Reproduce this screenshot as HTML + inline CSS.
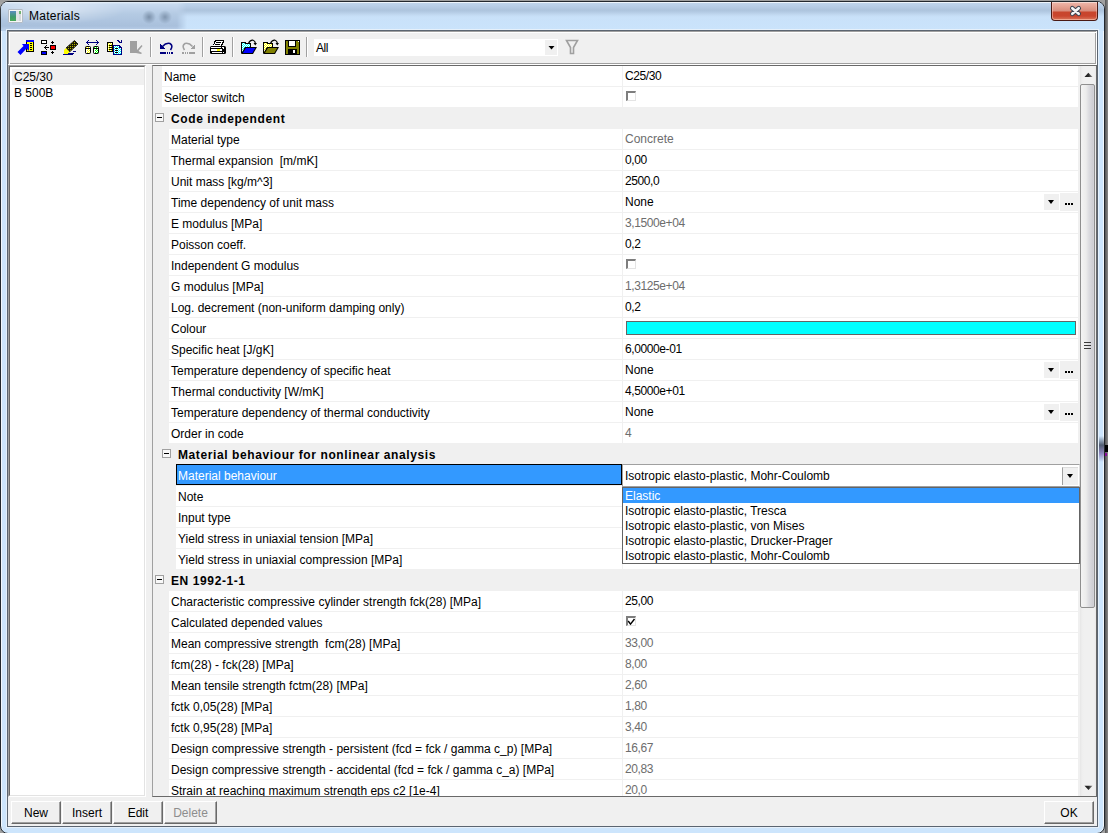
<!DOCTYPE html>
<html><head><meta charset="utf-8">
<style>
*{margin:0;padding:0;box-sizing:border-box}
html,body{width:1108px;height:833px;overflow:hidden;background:#a0a0a0;font-family:"Liberation Sans",sans-serif;font-size:12px;color:#000}
.a{position:absolute}
#bgr{left:1105px;top:0;width:3px;height:833px;background:linear-gradient(90deg,#555,#8a8a8a)}
#win{box-shadow:inset 1px 1px 0 #f2f7fc,inset -1px 0 0 #f2f7fc;left:0;top:1px;width:1105px;height:833px;border:1px solid #23282e;border-radius:8px;background:#cde5fc;overflow:hidden}
#title{left:0;top:0;width:1103px;height:29px;background:linear-gradient(180deg,#eef5fc 0px,#eef5fc 1px,#bfd4eb 1px,#b8cee7 4px,#adc4dd 8px,#b4cbe4 10px,#c3daf2 13px,#c9e1f9 15px,#cae3fb 27px)}
#titleL{-webkit-mask-image:linear-gradient(90deg,#000 176px,transparent 186px);left:0;top:0;width:190px;height:29px;background:linear-gradient(180deg,#e9f1f9 0px,#c8daef 2px,#b4cae3 12px,#a9c0dc 24px,#b8cee8 28px)}
#client{left:7px;top:30px;width:1091px;height:797px;border:1px solid #5b6571;background:#f0f0f0}
.t{position:absolute;white-space:nowrap;line-height:14px}
.row{position:absolute;background:#fff;height:20px}
.sep{position:absolute;height:1px;background:#f0f0f0}
.lab{position:absolute;white-space:nowrap;line-height:20px;height:20px}
.val{position:absolute;left:625px;white-space:nowrap;line-height:20px;height:20px}
.g{color:#6d6d6d}
.hdr{font-weight:bold;letter-spacing:0.6px}
.box{position:absolute;width:9px;height:9px;border:1px solid #a0a0a0;background:#f8f8f8}
.box:after{content:"";position:absolute;left:1px;top:3px;width:5px;height:1px;background:#000}
.cb{position:absolute;width:10px;height:10px;border-style:solid;border-width:2px 1px 1px 2px;border-color:#7e7e7e #e4e4e4 #e4e4e4 #7e7e7e;background:#fff}
.btn{position:absolute;height:23px;border:1px solid;border-color:#fff #696969 #696969 #fff;box-shadow:inset -1px -1px 0 #a0a0a0;background:#f0f0f0;text-align:center;line-height:21px;padding-top:1px;font-size:12px}
.ddb{position:absolute;width:15px;height:16px;background:#f0f0f0}
.ddb:after{content:"";position:absolute;left:4px;top:6px;border-left:3.5px solid transparent;border-right:3.5px solid transparent;border-top:4px solid #000}
.ell{position:absolute;width:19px;height:18px;background:#f0f0f0}
.ell:after{content:"";position:absolute;left:5px;top:10px;width:2px;height:2px;background:#000;box-shadow:3px 0 0 #000,6px 0 0 #000}

</style></head><body>
<div id="bgr" class="a"></div>
<div id="win" class="a">
  <div id="title" class="a"></div>
  <div id="titleL" class="a"></div>
</div>
<div class="a" style="left:138px;top:9px;width:36px;height:16px;background:radial-gradient(circle 7px at 11px 8px,rgba(70,90,115,0.5),rgba(70,90,115,0) 100%),radial-gradient(circle 7px at 27px 8px,rgba(70,90,115,0.45),rgba(70,90,115,0) 100%)"></div>
<div class="a" style="left:1098px;top:436px;width:6px;height:26px;background:linear-gradient(180deg,rgba(60,70,90,0) 0%,rgba(60,70,90,0.85) 35%,rgba(110,90,160,0.7) 65%,rgba(150,130,200,0) 100%)"></div>
<div class="a" style="left:1105px;top:445px;width:3px;height:7px;background:#000"></div>
<div class="a" style="left:1105px;top:453px;width:2px;height:3px;background:#8a0a9a"></div>
<!-- close button -->
<div class="a" style="left:1051px;top:2px;width:47px;height:19px;border:1px solid #4a1a14;border-top:none;border-radius:0 0 4px 4px;box-shadow:inset 0 1px 0 #f6d8d0,inset 1px 0 0 rgba(255,210,200,0.5),inset -1px 0 0 rgba(255,210,200,0.4),inset 0 -1px 0 rgba(255,200,180,0.6);background:linear-gradient(180deg,#f0b8ac 0px,#e4a090 5px,#d88c7c 9px,#c8452c 10px,#c9452e 14px,#d66a50 17px,#e0907a 19px)"></div>
<svg class="a" style="left:1060px;top:0" width="30" height="22"><path d="M12.3 8.2 L18.7 13.8 M18.7 8.2 L12.3 13.8" stroke="#3a4350" stroke-width="4.6" stroke-linecap="round" fill="none"/><path d="M12.3 8.2 L18.7 13.8 M18.7 8.2 L12.3 13.8" stroke="#f6f6f6" stroke-width="2.6" stroke-linecap="round" fill="none"/></svg>
<!-- title icon & text -->
<div class="a" style="left:0;top:2px;width:200px;height:27px;background:radial-gradient(ellipse 70px 14px at 55px 8px,rgba(255,255,255,0.45),rgba(255,255,255,0))"></div>
<div class="a" style="left:8px;top:9px;width:15px;height:14px;border:1px solid #b4bcc6;border-radius:1px;background:#f6f6f6"></div>
<div class="a" style="left:10px;top:11px;width:6px;height:10px;background:linear-gradient(180deg,#5b8cc0,#3f9a68 60%,#4aa85a)"></div>
<div class="a" style="left:16px;top:11px;width:3px;height:10px;background:#e2e4e6"></div>
<div class="a" style="left:19px;top:11px;width:2px;height:10px;background:#d4d8dc"></div>
<div class="a" style="left:19px;top:11px;width:2px;height:3px;background:#6fb36f"></div>
<div class="t" style="left:29px;top:8px;font-size:12px;line-height:16px;letter-spacing:0.25px">Materials</div>

<div class="a" style="left:6px;top:29px;width:1093px;height:799px;border:1px solid #e6f0fa"></div>
<div id="client" class="a"></div>
<!-- toolbar etched frame -->
<div class="a" style="left:8px;top:31px;width:1088px;height:33px;border:1px solid #a0a0a0"></div>
<div class="a" style="left:9px;top:32px;width:1088px;height:33px;border:1px solid #fff;border-top-color:#fff"></div>
<div class="a" style="left:10px;top:33px;width:1085px;height:30px;background:#f0f0f0"></div>
<!-- TOOLBAR -->
<svg class="a" style="left:0;top:0" width="600" height="64" shape-rendering="crispEdges">
<defs>
<pattern id="pk" width="2" height="2" patternUnits="userSpaceOnUse"><rect width="2" height="2" fill="#1a1a00"/><rect width="1" height="1" fill="#b8b800"/></pattern>
<pattern id="pc" width="2" height="2" patternUnits="userSpaceOnUse"><rect width="2" height="2" fill="#00ffff"/><rect width="1" height="1" fill="#fff"/><rect x="1" y="1" width="1" height="1" fill="#fff"/></pattern>
<pattern id="py" width="2" height="2" patternUnits="userSpaceOnUse"><rect width="2" height="2" fill="#ffff00"/><rect width="1" height="1" fill="#fff"/><rect x="1" y="1" width="1" height="1" fill="#fff"/></pattern>
</defs>
<!-- icon1: arrow + doc -->
<rect x="26" y="40" width="8" height="12" fill="#000"/>
<rect x="26" y="40" width="8" height="2" fill="#0000ff"/>
<rect x="27" y="42" width="6" height="9" fill="#ffff00"/>
<rect x="30" y="43" width="2" height="1" fill="#000"/><rect x="30" y="45" width="2" height="1" fill="#000"/><rect x="30" y="47" width="2" height="1" fill="#000"/><rect x="30" y="49" width="2" height="1" fill="#000"/>
<polygon points="22,44 29,44 29,51 26.5,48.5 20.5,55 17.5,52 23.5,46" fill="#0000ff" shape-rendering="auto"/>
<!-- icon2: move -->
<rect x="41" y="40" width="6" height="4" fill="#000"/><rect x="42" y="41" width="4" height="2" fill="#fff"/>
<rect x="41" y="51" width="6" height="4" fill="#000"/><rect x="42" y="52" width="4" height="2" fill="#0000ff"/>
<rect x="50" y="45" width="6" height="5" fill="#000"/><rect x="51" y="46" width="4" height="3" fill="#ff0000"/>
<rect x="44" y="47" width="5" height="1" fill="#000"/><rect x="45" y="46" width="1" height="3" fill="#000"/><rect x="46" y="45" width="1" height="1" fill="#000"/><rect x="46" y="49" width="1" height="1" fill="#000"/>
<rect x="52" y="41" width="1" height="3" fill="#000"/><rect x="51" y="42" width="3" height="1" fill="#000"/>
<rect x="52" y="51" width="1" height="3" fill="#000"/><rect x="51" y="52" width="3" height="1" fill="#000"/>
<!-- icon3: pencil -->
<polygon points="66,48 74.5,40.5 78,44 69.5,52" fill="url(#pk)" shape-rendering="auto"/>
<path d="M66 48 L74.5 40.5 L78 44 L69.5 52 Z" stroke="#000" stroke-width="0.8" fill="none" shape-rendering="auto"/>
<polygon points="64,50 66,48 69.5,52 68,54 64,54" fill="#ffff00" shape-rendering="auto"/>
<rect x="63" y="54" width="10" height="1" fill="#000080"/><rect x="68" y="53" width="6" height="1" fill="#000080"/><rect x="73" y="51" width="3" height="1" fill="#000080"/>
<!-- icon4: cylinders -->
<rect x="86" y="42" width="13" height="1" fill="#000080"/>
<rect x="87" y="41" width="1" height="3" fill="#000080"/><rect x="88" y="40" width="1" height="1" fill="#000080"/><rect x="88" y="44" width="1" height="1" fill="#000080"/>
<rect x="97" y="41" width="1" height="3" fill="#000080"/><rect x="96" y="40" width="1" height="1" fill="#000080"/><rect x="96" y="44" width="1" height="1" fill="#000080"/>
<rect x="85" y="46" width="6" height="8" rx="2" fill="#000" shape-rendering="auto"/><rect x="86" y="47" width="4" height="1" fill="url(#py)"/><rect x="86" y="49" width="4" height="4" fill="url(#py)"/><rect x="86" y="49" width="1" height="4" fill="#fff"/>
<pattern id="pg" width="2" height="2" patternUnits="userSpaceOnUse"><rect width="2" height="2" fill="#00ff00"/><rect width="1" height="1" fill="#fff"/><rect x="1" y="1" width="1" height="1" fill="#fff"/></pattern>
<rect x="93" y="46" width="6" height="8" rx="2" fill="#000" shape-rendering="auto"/><rect x="94" y="47" width="4" height="1" fill="url(#pg)"/><rect x="94" y="49" width="4" height="4" fill="url(#pg)"/><rect x="94" y="49" width="1" height="4" fill="#fff"/>
<!-- icon5: copy docs -->
<rect x="107" y="42" width="6" height="10" fill="#000"/><rect x="108" y="43" width="4" height="8" fill="url(#py)"/>
<rect x="109" y="45" width="3" height="1" fill="#000"/><rect x="109" y="47" width="3" height="1" fill="#000"/><rect x="109" y="49" width="3" height="1" fill="#000"/>
<polygon points="113,45 119,45 122,48 122,55 113,55" fill="#000080"/>
<rect x="114" y="46" width="7" height="8" fill="url(#pc)"/><polygon points="119,45 122,48 119,48" fill="#000080"/>
<rect x="115" y="48" width="3" height="1" fill="#000"/><rect x="115" y="50" width="3" height="1" fill="#000"/><rect x="115" y="52" width="3" height="1" fill="#000"/>
<rect x="117" y="40" width="2" height="1" fill="#000080"/><rect x="118" y="41" width="2" height="1" fill="#000080"/><rect x="119" y="42" width="3" height="1" fill="#000080"/><rect x="121" y="40" width="1" height="3" fill="#000080"/>
<!-- icon6: gray -->
<rect x="130" y="41" width="7" height="12" fill="#a0a0a0"/>
<polygon points="137,50 141.5,45 142.5,46 138.5,51 142,53 141,54 136,53" fill="#a0a0a0" shape-rendering="auto"/>
<!-- separators -->
<rect x="150" y="37" width="1" height="20" fill="#a0a0a0"/><rect x="151" y="37" width="1" height="20" fill="#fff"/>
<rect x="202" y="37" width="1" height="20" fill="#a0a0a0"/><rect x="203" y="37" width="1" height="20" fill="#fff"/>
<rect x="232" y="37" width="1" height="20" fill="#a0a0a0"/><rect x="233" y="37" width="1" height="20" fill="#fff"/>
<rect x="306" y="37" width="1" height="20" fill="#a0a0a0"/><rect x="307" y="37" width="1" height="20" fill="#fff"/>
<!-- undo -->
<polygon points="160,44 160,49 165,49" fill="#000080"/>
<path d="M162.5 46.5 Q166 42.5 170 43.5 Q173.5 45.5 170.5 50" stroke="#000080" stroke-width="1.6" fill="none" shape-rendering="auto"/>
<rect x="160" y="52" width="6" height="2" fill="#000080"/><rect x="167" y="52" width="1" height="2" fill="#000080"/><rect x="169" y="52" width="1" height="2" fill="#000080"/><rect x="171" y="52" width="2" height="2" fill="#000080"/>
<!-- redo -->
<polygon points="195,44 195,49 190,49" fill="#a0a0a0"/>
<path d="M192.5 46.5 Q189 42.5 185 43.5 Q181.5 45.5 184.5 50" stroke="#a0a0a0" stroke-width="1.6" fill="none" shape-rendering="auto"/>
<rect x="189" y="52" width="6" height="2" fill="#a0a0a0"/><rect x="187" y="52" width="1" height="2" fill="#a0a0a0"/><rect x="185" y="52" width="1" height="2" fill="#a0a0a0"/><rect x="182" y="52" width="2" height="2" fill="#a0a0a0"/>
<!-- printer -->
<polygon points="215,40 224,40 224,42 222,46 213,46" fill="#000"/>
<polygon points="216,41 223,41 221,45.5 213.5,45.5" fill="#fff"/>
<rect x="216" y="42" width="5" height="1" fill="#000"/><rect x="215" y="44" width="5" height="1" fill="#000"/>
<rect x="210" y="46" width="16" height="8" rx="1.5" fill="#000" shape-rendering="auto"/>
<rect x="211" y="47" width="10" height="1" fill="#fff"/><rect x="211" y="49" width="11" height="2" fill="#fff"/><rect x="217" y="49" width="3" height="2" fill="#ffff00"/>
<rect x="212" y="52" width="10" height="1" fill="#fff"/>
<rect x="222" y="47" width="2" height="1" fill="#fff"/><rect x="223" y="48" width="1" height="1" fill="#fff"/><rect x="223" y="52" width="1" height="1" fill="#fff"/>
<!-- open1 -->
<polygon points="241,42 245,42 246,43 251,43 251,48 245,48 242,53 241,53" fill="#000"/>
<rect x="242" y="43" width="3" height="1" fill="url(#pc)"/><rect x="242" y="44" width="8" height="4" fill="url(#pc)"/><rect x="242" y="48" width="2" height="4" fill="url(#pc)"/>
<polygon points="245,47 257,47 253,54 241,54" fill="#000" shape-rendering="auto"/>
<polygon points="246,48 255.2,48 252.4,53 242.8,53" fill="#0000ff" shape-rendering="auto"/>
<path d="M248.5 43.5 Q250 39.8 253 40.2 Q255 40.8 255.3 43" stroke="#000" stroke-width="1.2" fill="none" shape-rendering="auto"/>
<polygon points="253.5,43 257,43 255.3,45.5" fill="#000" shape-rendering="auto"/>
<!-- open2 -->
<polygon points="263,42 267,42 268,43 273,43 273,48 267,48 264,53 263,53" fill="#000"/>
<rect x="264" y="43" width="3" height="1" fill="url(#py)"/><rect x="264" y="44" width="8" height="4" fill="url(#py)"/><rect x="264" y="48" width="2" height="4" fill="url(#py)"/>
<polygon points="267,47 279,47 275,54 263,54" fill="#000" shape-rendering="auto"/>
<polygon points="268,48 277.2,48 274.4,53 264.8,53" fill="#808000" shape-rendering="auto"/>
<path d="M270.5 43.5 Q272 39.8 275 40.2 Q277 40.8 277.3 43" stroke="#000" stroke-width="1.2" fill="none" shape-rendering="auto"/>
<polygon points="275.5,43 279,43 277.3,45.5" fill="#000" shape-rendering="auto"/>
<!-- save -->
<rect x="285" y="40" width="15" height="15" fill="#000"/>
<rect x="286" y="41" width="13" height="13" fill="#808000"/>
<rect x="288" y="41" width="8" height="6" fill="#000"/><rect x="289" y="41" width="6" height="5" fill="#fff"/>
<rect x="288" y="49" width="9" height="5" fill="#000"/><rect x="293" y="50" width="2" height="3" fill="#fff"/>
<rect x="298" y="41" width="1" height="1" fill="#fff"/>
<!-- combo -->
<rect x="314" y="39" width="244" height="17" fill="#fff"/>
<rect x="545" y="40" width="12" height="15" fill="#f0f0f0"/>
<polygon points="548.5,46 554.5,46 551.5,49.5" fill="#000" shape-rendering="auto"/>
<!-- filter -->
<path d="M566.5 40.5 H577.5 L573.5 47.5 V53.5 H570.5 V47.5 Z" stroke="#a0a0a0" stroke-width="1.6" fill="none" shape-rendering="auto"/>
</svg>

<div class="t" style="left:316px;top:41px;font-size:12px;line-height:14px;letter-spacing:-0.5px">All</div>

<!-- left list -->
<div class="a" style="left:8px;top:65px;width:138px;height:732px;border:1px solid;border-color:#a0a0a0 #fff #fff #a0a0a0"></div>
<div class="a" style="left:9px;top:66px;width:136px;height:730px;border:1px solid;border-color:#696969 #e3e3e3 #e3e3e3 #696969;background:#fff"></div>
<div class="a" style="left:12px;top:69px;width:132px;height:16px;background:#f0f0f0"></div>
<div class="t" style="left:14px;top:70px">C25/30</div>
<div class="t" style="left:14px;top:86px">B 500B</div>

<!-- grid -->
<div class="a" style="left:152px;top:65px;width:945px;height:732px;border:1px solid #696969;border-left-color:#a0a0a0;background:#f0f0f0"></div>
<div class="a" style="left:0;top:0;width:1108px;height:796px;overflow:hidden">
<div class="row" style="left:162px;top:66px;width:460px"></div>
<div class="row" style="left:623px;top:66px;width:455px"></div>
<div class="sep" style="left:162px;top:86px;width:916px"></div>
<div class="lab" style="left:164px;top:67px">Name</div>
<div class="val" style="top:66px;letter-spacing:-0.4px;">C25/30</div>
<div class="row" style="left:162px;top:87px;width:460px"></div>
<div class="row" style="left:623px;top:87px;width:455px"></div>
<div class="sep" style="left:162px;top:107px;width:916px"></div>
<div class="lab" style="left:164px;top:88px">Selector switch</div>
<div class="cb" style="left:626px;top:91px"></div>
<div class="box" style="left:155px;top:113px"></div>
<div class="lab hdr" style="left:171px;top:109px">Code independent</div>
<div class="row" style="left:169px;top:129px;width:453px"></div>
<div class="row" style="left:623px;top:129px;width:455px"></div>
<div class="sep" style="left:169px;top:149px;width:909px"></div>
<div class="lab" style="left:171px;top:130px">Material type</div>
<div class="val g" style="top:129px;">Concrete</div>
<div class="row" style="left:169px;top:150px;width:453px"></div>
<div class="row" style="left:623px;top:150px;width:455px"></div>
<div class="sep" style="left:169px;top:170px;width:909px"></div>
<div class="lab" style="left:171px;top:151px">Thermal expansion&nbsp; [m/mK]</div>
<div class="val" style="top:150px;letter-spacing:-0.4px;">0,00</div>
<div class="row" style="left:169px;top:171px;width:453px"></div>
<div class="row" style="left:623px;top:171px;width:455px"></div>
<div class="sep" style="left:169px;top:191px;width:909px"></div>
<div class="lab" style="left:171px;top:172px">Unit mass [kg/m^3]</div>
<div class="val" style="top:171px;letter-spacing:-0.4px;">2500,0</div>
<div class="row" style="left:169px;top:192px;width:453px"></div>
<div class="row" style="left:623px;top:192px;width:455px"></div>
<div class="sep" style="left:169px;top:212px;width:909px"></div>
<div class="lab" style="left:171px;top:193px">Time dependency of unit mass</div>
<div class="val" style="top:192px;">None</div>
<div class="ddb" style="left:1044px;top:194px"></div>
<div class="ell" style="left:1060px;top:193px"></div>
<div class="row" style="left:169px;top:213px;width:453px"></div>
<div class="row" style="left:623px;top:213px;width:455px"></div>
<div class="sep" style="left:169px;top:233px;width:909px"></div>
<div class="lab" style="left:171px;top:214px">E modulus [MPa]</div>
<div class="val g" style="top:213px;letter-spacing:-0.4px;">3,1500e+04</div>
<div class="row" style="left:169px;top:234px;width:453px"></div>
<div class="row" style="left:623px;top:234px;width:455px"></div>
<div class="sep" style="left:169px;top:254px;width:909px"></div>
<div class="lab" style="left:171px;top:235px">Poisson coeff.</div>
<div class="val" style="top:234px;letter-spacing:-0.4px;">0,2</div>
<div class="row" style="left:169px;top:255px;width:453px"></div>
<div class="row" style="left:623px;top:255px;width:455px"></div>
<div class="sep" style="left:169px;top:275px;width:909px"></div>
<div class="lab" style="left:171px;top:256px">Independent G modulus</div>
<div class="cb" style="left:626px;top:259px"></div>
<div class="row" style="left:169px;top:276px;width:453px"></div>
<div class="row" style="left:623px;top:276px;width:455px"></div>
<div class="sep" style="left:169px;top:296px;width:909px"></div>
<div class="lab" style="left:171px;top:277px">G modulus [MPa]</div>
<div class="val g" style="top:276px;letter-spacing:-0.4px;">1,3125e+04</div>
<div class="row" style="left:169px;top:297px;width:453px"></div>
<div class="row" style="left:623px;top:297px;width:455px"></div>
<div class="sep" style="left:169px;top:317px;width:909px"></div>
<div class="lab" style="left:171px;top:298px">Log. decrement (non-uniform damping only)</div>
<div class="val" style="top:297px;letter-spacing:-0.4px;">0,2</div>
<div class="row" style="left:169px;top:318px;width:453px"></div>
<div class="row" style="left:623px;top:318px;width:455px"></div>
<div class="sep" style="left:169px;top:338px;width:909px"></div>
<div class="lab" style="left:171px;top:319px">Colour</div>
<div class="a" style="left:626px;top:321px;width:450px;height:14px;border:1px solid #646464;background:#00ffff"></div>
<div class="row" style="left:169px;top:339px;width:453px"></div>
<div class="row" style="left:623px;top:339px;width:455px"></div>
<div class="sep" style="left:169px;top:359px;width:909px"></div>
<div class="lab" style="left:171px;top:340px">Specific heat [J/gK]</div>
<div class="val" style="top:339px;letter-spacing:-0.4px;">6,0000e-01</div>
<div class="row" style="left:169px;top:360px;width:453px"></div>
<div class="row" style="left:623px;top:360px;width:455px"></div>
<div class="sep" style="left:169px;top:380px;width:909px"></div>
<div class="lab" style="left:171px;top:361px">Temperature dependency of specific heat</div>
<div class="val" style="top:360px;">None</div>
<div class="ddb" style="left:1044px;top:362px"></div>
<div class="ell" style="left:1060px;top:361px"></div>
<div class="row" style="left:169px;top:381px;width:453px"></div>
<div class="row" style="left:623px;top:381px;width:455px"></div>
<div class="sep" style="left:169px;top:401px;width:909px"></div>
<div class="lab" style="left:171px;top:382px">Thermal conductivity [W/mK]</div>
<div class="val" style="top:381px;letter-spacing:-0.4px;">4,5000e+01</div>
<div class="row" style="left:169px;top:402px;width:453px"></div>
<div class="row" style="left:623px;top:402px;width:455px"></div>
<div class="sep" style="left:169px;top:422px;width:909px"></div>
<div class="lab" style="left:171px;top:403px">Temperature dependency of thermal conductivity</div>
<div class="val" style="top:402px;">None</div>
<div class="ddb" style="left:1044px;top:404px"></div>
<div class="ell" style="left:1060px;top:403px"></div>
<div class="row" style="left:169px;top:423px;width:453px"></div>
<div class="row" style="left:623px;top:423px;width:455px"></div>
<div class="sep" style="left:169px;top:443px;width:909px"></div>
<div class="lab" style="left:171px;top:424px">Order in code</div>
<div class="val g" style="top:423px;letter-spacing:-0.4px;">4</div>
<div class="box" style="left:162px;top:449px"></div>
<div class="lab hdr" style="left:178px;top:445px">Material behaviour for nonlinear analysis</div>
<div class="row" style="left:176px;top:465px;width:446px"></div>
<div class="row" style="left:623px;top:465px;width:455px"></div>
<div class="sep" style="left:176px;top:485px;width:902px"></div>
<div class="a" style="left:176px;top:464px;width:446px;height:21px;border:1px solid #000;background:#3399ff"></div>
<div class="lab" style="left:178px;top:466px;color:#fff">Material behaviour</div>
<div class="row" style="left:176px;top:486px;width:446px"></div>
<div class="row" style="left:623px;top:486px;width:455px"></div>
<div class="sep" style="left:176px;top:506px;width:902px"></div>
<div class="lab" style="left:178px;top:487px">Note</div>
<div class="row" style="left:176px;top:507px;width:446px"></div>
<div class="row" style="left:623px;top:507px;width:455px"></div>
<div class="sep" style="left:176px;top:527px;width:902px"></div>
<div class="lab" style="left:178px;top:508px">Input type</div>
<div class="row" style="left:176px;top:528px;width:446px"></div>
<div class="row" style="left:623px;top:528px;width:455px"></div>
<div class="sep" style="left:176px;top:548px;width:902px"></div>
<div class="lab" style="left:178px;top:529px">Yield stress in uniaxial tension [MPa]</div>
<div class="row" style="left:176px;top:549px;width:446px"></div>
<div class="row" style="left:623px;top:549px;width:455px"></div>
<div class="sep" style="left:176px;top:569px;width:902px"></div>
<div class="lab" style="left:178px;top:550px">Yield stress in uniaxial compression [MPa]</div>
<div class="box" style="left:155px;top:575px"></div>
<div class="lab hdr" style="left:171px;top:571px">EN 1992-1-1</div>
<div class="row" style="left:169px;top:591px;width:453px"></div>
<div class="row" style="left:623px;top:591px;width:455px"></div>
<div class="sep" style="left:169px;top:611px;width:909px"></div>
<div class="lab" style="left:171px;top:592px">Characteristic compressive cylinder strength fck(28) [MPa]</div>
<div class="val" style="top:591px;letter-spacing:-0.4px;">25,00</div>
<div class="row" style="left:169px;top:612px;width:453px"></div>
<div class="row" style="left:623px;top:612px;width:455px"></div>
<div class="sep" style="left:169px;top:632px;width:909px"></div>
<div class="lab" style="left:171px;top:613px">Calculated depended values</div>
<div class="cb" style="left:626px;top:616px"></div>
<svg class="a" style="left:626px;top:616px" width="10" height="10"><path d="M2.2 5 L4.5 8.2 L8.5 3" stroke="#000" stroke-width="1.4" fill="none"/></svg>
<div class="row" style="left:169px;top:633px;width:453px"></div>
<div class="row" style="left:623px;top:633px;width:455px"></div>
<div class="sep" style="left:169px;top:653px;width:909px"></div>
<div class="lab" style="left:171px;top:634px">Mean compressive strength&nbsp; fcm(28) [MPa]</div>
<div class="val g" style="top:633px;letter-spacing:-0.4px;">33,00</div>
<div class="row" style="left:169px;top:654px;width:453px"></div>
<div class="row" style="left:623px;top:654px;width:455px"></div>
<div class="sep" style="left:169px;top:674px;width:909px"></div>
<div class="lab" style="left:171px;top:655px">fcm(28) - fck(28) [MPa]</div>
<div class="val g" style="top:654px;letter-spacing:-0.4px;">8,00</div>
<div class="row" style="left:169px;top:675px;width:453px"></div>
<div class="row" style="left:623px;top:675px;width:455px"></div>
<div class="sep" style="left:169px;top:695px;width:909px"></div>
<div class="lab" style="left:171px;top:676px">Mean tensile strength fctm(28) [MPa]</div>
<div class="val g" style="top:675px;letter-spacing:-0.4px;">2,60</div>
<div class="row" style="left:169px;top:696px;width:453px"></div>
<div class="row" style="left:623px;top:696px;width:455px"></div>
<div class="sep" style="left:169px;top:716px;width:909px"></div>
<div class="lab" style="left:171px;top:697px">fctk 0,05(28) [MPa]</div>
<div class="val g" style="top:696px;letter-spacing:-0.4px;">1,80</div>
<div class="row" style="left:169px;top:717px;width:453px"></div>
<div class="row" style="left:623px;top:717px;width:455px"></div>
<div class="sep" style="left:169px;top:737px;width:909px"></div>
<div class="lab" style="left:171px;top:718px">fctk 0,95(28) [MPa]</div>
<div class="val g" style="top:717px;letter-spacing:-0.4px;">3,40</div>
<div class="row" style="left:169px;top:738px;width:453px"></div>
<div class="row" style="left:623px;top:738px;width:455px"></div>
<div class="sep" style="left:169px;top:758px;width:909px"></div>
<div class="lab" style="left:171px;top:739px">Design compressive strength - persistent (fcd = fck / gamma c_p) [MPa]</div>
<div class="val g" style="top:738px;letter-spacing:-0.4px;">16,67</div>
<div class="row" style="left:169px;top:759px;width:453px"></div>
<div class="row" style="left:623px;top:759px;width:455px"></div>
<div class="sep" style="left:169px;top:779px;width:909px"></div>
<div class="lab" style="left:171px;top:760px">Design compressive strength - accidental (fcd = fck / gamma c_a) [MPa]</div>
<div class="val g" style="top:759px;letter-spacing:-0.4px;">20,83</div>
<div class="row" style="left:169px;top:780px;width:453px"></div>
<div class="row" style="left:623px;top:780px;width:455px"></div>
<div class="sep" style="left:169px;top:800px;width:909px"></div>
<div class="lab" style="left:171px;top:781px">Strain at reaching maximum strength eps c2 [1e-4]</div>
<div class="val g" style="top:780px;letter-spacing:-0.4px;">20,0</div>
</div>
<!-- combo -->
<div class="a" style="left:622px;top:464px;width:458px;height:23px;border:1px solid #a0a0a0;border-right-color:#dcdcdc;border-bottom-color:#a0a0a0;background:#fff"></div>
<div class="lab" style="left:625px;top:466px">Isotropic elasto-plastic, Mohr-Coulomb</div>
<div class="ddb" style="left:1062px;top:467px;width:16px;height:18px;border-left:1px solid #a0a0a0;border-top:1px solid #dcdcdc"></div>
<!-- dropdown list -->
<div class="a" style="left:622px;top:487px;width:458px;height:77px;border:1px solid #646464;background:#fff"></div>
<div class="a" style="left:623px;top:488px;width:456px;height:15px;background:#3399ff"></div>
<div class="lab" style="left:625px;top:486px;color:#fff">Elastic</div>
<div class="lab" style="left:625px;top:501px">Isotropic elasto-plastic, Tresca</div>
<div class="lab" style="left:625px;top:516px">Isotropic elasto-plastic, von Mises</div>
<div class="lab" style="left:625px;top:531px">Isotropic elasto-plastic, Drucker-Prager</div>
<div class="lab" style="left:625px;top:546px">Isotropic elasto-plastic, Mohr-Coulomb</div>

<!-- scrollbar -->
<div class="a" style="left:1080px;top:66px;width:16px;height:730px;background:linear-gradient(90deg,#e6e6e6 0px,#eeeeee 2px,#f0f0f0 4px,#f0f0f0 14px,#e8e8e8 16px)"></div>
<svg class="a" style="left:1080px;top:66px" width="16" height="730"><defs><linearGradient id="ag" x1="0" y1="0" x2="1" y2="0"><stop offset="0" stop-color="#1a1a1a"/><stop offset="0.5" stop-color="#2a2a2a"/><stop offset="1" stop-color="#8a8a8a"/></linearGradient></defs>
<polygon points="4.5,11 8.3,6.8 12.5,11" fill="url(#ag)"/>
<polygon points="4.5,719.8 12.5,719.8 8.5,724" fill="url(#ag)"/></svg>

<div class="a" style="left:1080px;top:84px;width:15px;height:524px;border:1px solid #8f8f8f;border-radius:2px;background:linear-gradient(90deg,#f4f4f4 0px,#ececec 5px,#dcdce0 8px,#cdcdd2 12px,#d8d8dc 13px)"></div>
<div class="a" style="left:1084px;top:342px;width:7px;height:1px;background:#3a3a3a;box-shadow:0 3px 0 #3a3a3a,0 6px 0 #3a3a3a"></div>
<!-- bottom buttons -->
<div class="btn" style="left:11px;top:801px;width:50px">New</div>
<div class="btn" style="left:62px;top:801px;width:50px">Insert</div>
<div class="btn" style="left:113px;top:801px;width:50px">Edit</div>
<div class="btn" style="left:164px;top:801px;width:53px;color:#8d8d8d">Delete</div>
<div class="btn" style="left:1044px;top:801px;width:50px">OK</div>

</body></html>
